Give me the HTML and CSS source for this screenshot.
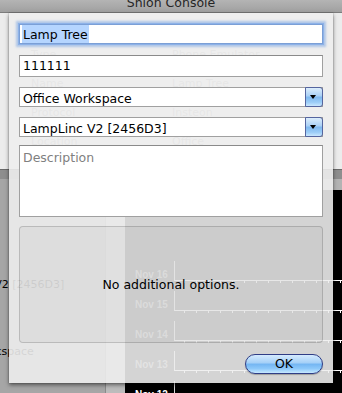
FILE: index.html
```html
<!DOCTYPE html>
<html lang="en">
<head>
    <meta charset="UTF-8">
    <title>Shion Console</title>
    <link rel="stylesheet" href="styles.css">
</head>
<body>
    <!-- Window behind the sheet -->
    <div class="console">
        <div class="titlebar"><span>Shion Console</span></div>
        <div class="details">
            <div class="detail-row"><span>Type</span><span>Phone Emulator</span></div>
            <div class="detail-row"><span>Name</span><span>Lamp Tree</span></div>
            <div class="detail-row"><span>Protocol</span><span>Insteon</span></div>
            <div class="detail-row"><span>Location</span><span>Office</span></div>
        </div>
        <div class="band"></div>
        <div class="main">
            <div class="devices">
                <div class="device-list">
                    <p class="device">LampLinc V2 [2456D3]</p>
                    <p class="device second">Office Workspace</p>
                </div>
                <div class="scroller"></div>
            </div>
            <div class="chart">
                <div class="chart-row"><span class="day">Nov 16</span><div class="plot"></div></div>
                <div class="chart-row"><span class="day">Nov 15</span><div class="plot"></div></div>
                <div class="chart-row"><span class="day">Nov 14</span><div class="plot"></div></div>
                <div class="chart-row"><span class="day">Nov 13</span><div class="plot"></div></div>
                <div class="chart-row"><span class="day">Nov 12</span><div class="plot"></div></div>
            </div>
        </div>
    </div>

    <!-- Edit sheet -->
    <div class="sheet">
        <div class="field focused name"><span class="sel">Lamp Tree</span></div>
        <div class="field address">111111</div>
        <div class="popup first">
            <span class="value">Office Workspace</span>
            <span class="arrow"></span>
        </div>
        <div class="popup second">
            <span class="value">LampLinc V2 [2456D3]</span>
            <span class="arrow"></span>
        </div>
        <div class="desc">Description</div>
        <div class="options">No additional options.</div>
        <div class="actions">
            <button class="ok">OK</button>
        </div>
    </div>
</body>
</html>
```

FILE: styles.css
```css
/* General */
* {
    box-sizing: border-box;
}

body {
    margin: 0;
    width: 342px;
    height: 393px;
    overflow: hidden;
    position: relative;
    font-family: "DejaVu Sans", sans-serif;
    font-size: 12.5px;
    color: #000;
    background-color: #a5a5a5;
}

/* Background window */
.console {
    width: 342px;
    height: 393px;
    display: flex;
    flex-direction: column;
    overflow: hidden;
}

.titlebar {
    height: 13px;
    flex: none;
    overflow: hidden;
    text-align: center;
    line-height: 13px;
    color: #262626;
    background: linear-gradient(#b4b4b4, #a0a0a0);
    border-bottom: 1px solid #7c7c7c;
}

.titlebar span {
    display: block;
    margin-top: -4px;
}

.details {
    height: 156px;
    flex: none;
    padding: 35px 0 0 31px;
    font-size: 11px;
    line-height: 13px;
    color: #a4a4a4;
    background-color: #ececec;
}

.detail-row {
    display: grid;
    grid-template-columns: 141px 1fr;
    height: 29px;
}

.band {
    height: 10px;
    flex: none;
    background-color: #8e8e8e;
    border-top: 1px solid #6a6a6a;
}

.main {
    flex: 1;
    display: flex;
}

.devices {
    width: 125px;
    display: flex;
    background-color: #a6a6a6;
}

.device-list {
    flex: 1;
    padding-top: 99px;
    font-size: 11px;
    line-height: 13px;
    white-space: nowrap;
}

.device {
    margin: 0 0 0 -62px;
}

.device.second {
    margin-top: 54px;
}

.scroller {
    width: 20px;
    background-color: #bcbcbc;
    border-left: 1px solid #8a8a8a;
}

.chart {
    flex: 1;
    padding-top: 61px;
    background-color: #000;
    border-top: 11px solid #b3b3b3;
}

.chart-row {
    display: flex;
    height: 30px;
}

.day {
    width: 49px;
    padding-left: 10px;
    align-self: flex-end;
    font-family: "Liberation Sans", sans-serif;
    font-weight: bold;
    font-size: 10px;
    line-height: 12px;
    color: #8c8c8c;
}

.chart-row:last-child .day {
    color: #fff;
}

.plot {
    flex: 1;
    margin-top: 10px;
    position: relative;
    border-left: 1px solid #d8d8d8;
    border-bottom: 1px solid #fff;
}

.plot::after {
    content: "";
    position: absolute;
    left: 0;
    right: 0;
    top: 100%;
    height: 3px;
    background: repeating-linear-gradient(270deg, transparent 0 1px, #fff 1px 2px, transparent 2px 12px);
}

/* Sheet */
.sheet {
    position: absolute;
    top: 13px;
    left: 9px;
    width: 324px;
    height: 370px;
    padding: 11px 10px 9px;
    display: flex;
    flex-direction: column;
    background-color: rgba(238, 238, 238, 0.89);
    box-shadow: 0 2px 4px rgba(0, 0, 0, 0.5), 0 0 1px rgba(0, 0, 0, 0.4);
}

.field {
    height: 22px;
    flex: none;
    padding: 0 3px;
    line-height: 20px;
    white-space: nowrap;
    background-color: #fff;
    border: 1px solid #a0a0a0;
    border-top-color: #8a8a8a;
}

.field.focused {
    height: 20px;
    padding-left: 2px;
    border-color: #7b9fd6;
    box-shadow: 0 0 0 1px #8db2e8, 0 0 2px 3px rgba(123, 165, 226, 0.55);
}

.name {
    margin-bottom: 11px;
}

.address {
    margin-bottom: 10px;
}

.sel {
    display: inline-block;
    height: 18px;
    padding: 2px 1px 0;
    line-height: 16px;
    vertical-align: top;
    background-color: #b5d5ff;
}

.popup {
    height: 20px;
    flex: none;
    display: flex;
    background-color: #fff;
    border: 1px solid #a0a0a0;
}

.popup.first {
    margin-bottom: 10px;
}

.popup.second {
    margin-bottom: 8px;
}

.popup .value {
    flex: 1;
    padding: 4px 0 0 3px;
    line-height: 14px;
    white-space: nowrap;
}

.popup .arrow {
    width: 18px;
    margin: -1px -1px -1px 0;
    display: flex;
    align-items: center;
    justify-content: center;
    border: 1px solid #55659f;
    border-radius: 0 3px 3px 0;
    background: linear-gradient(#dcedfc, #a9d0f5 45%, #7fb8ef 50%, #9ccdf7 80%, #c9e7ff);
}

.popup .arrow::before {
    content: "";
    margin-left: -2px;
    border-left: 3px solid transparent;
    border-right: 3px solid transparent;
    border-top: 4px solid #000;
}

.desc {
    height: 72px;
    flex: none;
    margin-bottom: 9px;
    padding: 4px 3px;
    line-height: 15px;
    color: #808080;
    background-color: #fff;
    border: 1px solid #a0a0a0;
    border-top-color: #8a8a8a;
}

.options {
    height: 117px;
    flex: none;
    margin-bottom: 11px;
    display: flex;
    align-items: center;
    justify-content: center;
    border: 1px solid rgba(0, 0, 0, 0.16);
    border-radius: 4px;
    background-color: rgba(0, 0, 0, 0.035);
}

.actions {
    display: flex;
    justify-content: flex-end;
}

.ok {
    width: 78px;
    height: 20px;
    padding: 0;
    font: inherit;
    line-height: 18px;
    color: #000;
    border: 1px solid #2f3d86;
    border-radius: 10px;
    background: linear-gradient(#d5ebfe, #a3cff7 45%, #73b5f2 50%, #8cc8fa 75%, #c6e8ff);
    box-shadow: 0 1px 1px rgba(0, 0, 0, 0.25);
}
```
